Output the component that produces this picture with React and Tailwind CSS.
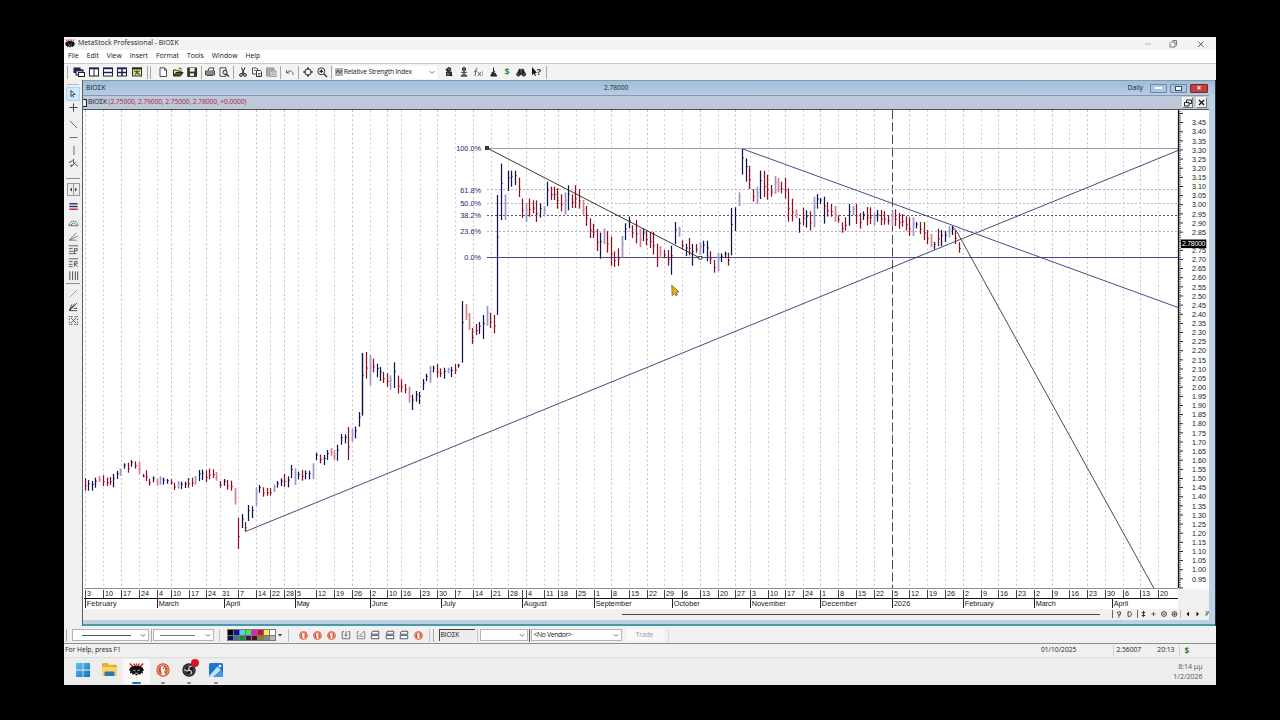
import React from 'react';

/* ---------- price bars: x, high, low, tone (scaled by 3 from a local origin) ---------- */
const SEG_A = '15:234-272r 26:240-272n 37:243-272n 47:233-263n 59:228-246p 70:226-258r 81:233-258r 92:231-255r 100:222-262n 112:213-237n 122:206-228l 133:190-206n 145:188-218r 155:180-200n 166:184-206r 178:185-222p 189:222-232r 199:211-243r 208:236-257r 221:229-247n 231:235-257p 240:229-254l 251:233-254n 262:237-251n 273:238-254r 284:248-270r 294:243-266l 305:245-267n 316:245-264n 326:234-263r 337:233-260r 347:228-254l 358:210-243n 368:209-240n 379:211-246r 389:206-238r 400:208-234r 410:216-242p 421:243-263r 432:237-257n 443:240-269r 454:242-272r 465:264-314p 475:353-447r 487:342-384n 497:366-395r 506:315-363n 517:319-354n 528:262-318l 539:255-278n 550:262-290r 561:264-287r 571:264-287r 582:253-276l 592:243-263n 603:235-258n 613:222-260r 625:229-262n 634:195-234n 645:205-255l 655:215-238n 667:210-242r 677:211-238n 688:212-238n 699:190-238l 710:158-180n 721:164-190r 732:165-195n 742:150-180n 753:144-168p 764:150-180p 773:134-182n 784:102-134n 795:103-130n 805:81-180r 816:87-125l 827:80-115n';
const SEG_B = '57:546-590n 68:370-557n 80:366-446r 90:375-467l 100:386-427r 111:401-442n 121:411-453n 131:426-459r 142:430-470r 152:436-480l 163:397-474n 175:437-490r 185:448-487r 196:462-490r 207:470-518p 217:494-540n 228:483-515n 239:486-522n 249:447-480n 259:431-454n 270:408-459l 280:407-427n 291:402-442r 302:415-441r 313:413-446n 324:413-430l 335:411-441n 346:402-432r 356:402-413n 367:213-398n 378:222-270p 387:249-300p 398:294-342r 409:282-315r 419:276-312n 430:255-327n 441:228-287l 452:248-294r 463:255-310r';
const SEG_C = '143:195-555n 154:101-270n 165:193-270l 175:122-183n 185:122-170n 196:122-165n 207:143-201r 218:206-264r 228:220-276l 239:206-260r 250:211-250r 260:211-276r 272:220-263n 283:228-258l 292:155-228n 304:170-210r 313:170-210r 323:175-236r 335:193-244r 346:187-254l 356:166-241n 367:193-234r 377:166-234r 388:177-236r 399:210-254p 410:228-288r 421:265-324r 431:281-324r 442:297-363r 452:308-386n 462:296-343l 473:303-368r 484:320-407r 494:364-411r 505:355-408r 516:318-382l 527:280-330n 538:260-295n 548:286-324r 560:270-340r 570:296-352p 581:296-333n 590:303-346r 602:306-354r 611:306-374r 622:341-411r 632:348-384p 644:360-384r 655:360-407r 664:347-434n 676:276-342n 687:290-320l 698:331-358r 709:341-378n 718:324-376r 728:342-407n 740:342-368r 750:336-374l 761:332-370n 772:332-394n 782:364-402r';
const SEG_D = '73:390-428r 84:368-424l 95:370-396n 106:365-384n 116:368-407r 125:234-376n 136:232-303n 147:187-228l 158:57-134n 169:85-155n 179:108-177r 190:177-215r 201:170-222l 212:122-207n 223:122-201r 233:134-209r 244:165-200r 255:138-192l 264:144-187p 275:155-190r 286:143-206r 296:175-275r 307:206-274r 318:238-264p 329:264-308n 340:233-286r 350:241-293n 361:244-302r 372:200-292l 382:192-236n 392:204-222n 403:200-281n 413:216-260r 424:222-260r 435:228-275p 446:256-278r 457:277-308r 467:262-302r 478:222-287n 489:228-256l 500:222-282r 511:249-296r 521:244-270n 531:231-286r 541:232-282r 552:250-286l 562:240-275n 573:240-285r 584:243-284r 595:255-284r 606:244-287l 616:238-288r 628:249-296r 638:252-290r 648:259-302r 659:262-318r 669:262-318l 680:276-295n 691:276-312r 702:276-330r 712:300-342r 723:312-352p 734:336-358n 745:296-348r 755:300-348n 767:304-336n 777:288-322l 787:288-315n 797:300-342r 808:337-368r';

const TONES = { n: '#12124e', r: '#8c0f24', l: '#9c98cf', p: '#d9808f' };

function parse(src, ox, oy) {
  return src.split(' ').map((s) => {
    const m = /(\d+):(\d+)-(\d+)(\w)/.exec(s);
    return { x: ox + m[1] / 3, hi: oy + m[2] / 3, lo: oy + m[3] / 3, tone: m[4] };
  });
}
const BARS = [
  ...parse(SEG_A, 80, 400),
  ...parse(SEG_B, 340, 230),
  ...parse(SEG_C, 450, 130),
  ...parse(SEG_D, 690, 130),
];

const WEEKS = [
  [85.5, '3'], [103.5, '10'], [121.5, '17'], [139.5, '24'], [157.5, '4'], [171.5, '10'], [189.5, '17'], [206.5, '24'],
  [220.5, '31'], [238.5, '7'], [256.5, '14'], [270.5, '22'], [284.5, '28'], [295.5, '5', 1], [316.5, '12'], [334.5, '19'],
  [352.5, '26'], [370.5, '2'], [387.5, '10'], [401.5, '16'], [420.5, '23'], [437.5, '30'], [455.5, '7'], [473.5, '14'],
  [491.5, '21'], [508.5, '28'], [526.5, '4'], [544.5, '11'], [558.5, '18'], [576.5, '25'], [594.5, '1'], [611.5, '8'],
  [629.5, '15'], [647.5, '22'], [664.5, '29'], [682.5, '6'], [700.5, '13'], [718.5, '20'], [735.5, '27'], [750.5, '3'],
  [768.5, '10'], [785.5, '17'], [803.5, '24'], [820.5, '1'], [838.5, '8'], [856.5, '15'], [874.5, '22'], [892.5, '5'],
  [909.5, '12'], [927.5, '19'], [945.5, '26'], [963.5, '2'], [981.5, '9'], [998.5, '16'], [1016.5, '23'], [1034.5, '2'],
  [1052.5, '9'], [1069.5, '16'], [1087.5, '23'], [1105.5, '30'], [1123.5, '6'], [1140.5, '13'], [1158.5, '20'],
];
const MONTHS = [
  [85.5, 'February', 30], [157.5, 'March', 20], [224.5, 'April', 14.5], [295.5, 'May', 13], [370.5, 'June', 16], [441.5, 'July', 13],
  [522.5, 'August', 23], [594.5, 'September', 36], [672.5, 'October', 26], [750.5, 'November', 34], [820.5, 'December', 35],
  [892.5, '2026', 16.5], [963.5, 'February', 29], [1034.5, 'March', 20], [1112.5, 'April', 14.5],
];
const PRICES = Array.from({ length: 51 }, (_, i) => 3.45 - i * 0.05).filter((p) => Math.abs(p - 2.8) > 0.01);
const yOf = (p) => 122.6 + (3.45 - p) * 182.5;
const FIBS = [['100.0%', 148.5], ['61.8%', 190], ['50.0%', 203.5], ['38.2%', 215.5], ['23.6%', 231.5], ['0.0%', 257.5]];

function Chart() {
  return (
    <svg className="block h-[499px] w-[1126px] shrink-0" viewBox="83 110 1126 499" fontFamily="'Liberation Sans', Arial, sans-serif">
      <rect x="83" y="110" width="1126" height="499" fill="#fff" />
      <rect x="1178" y="589.5" width="32" height="20" fill="#f0f0f0" />
      {WEEKS.filter((w) => !w[2]).map(([x], i) => (
        <line key={i} x1={x} x2={x} y1="110" y2="588" stroke={i % 5 === 0 || i % 5 === 2 ? '#c2c2c6' : '#d0d0d3'} strokeDasharray="2 2.6" />
      ))}
      <line x1="298.5" x2="298.5" y1="110" y2="588" stroke="#d4d4d7" strokeDasharray="2 2.6" />
      <line x1="892.5" x2="892.5" y1="110" y2="588" stroke="#4a4a4a" strokeDasharray="9 3.5" />

      <line x1="487" x2="1178" y1="148.5" y2="148.5" stroke="#9a9cb8" />
      <line x1="487" x2="1178" y1="189.5" y2="189.5" stroke="#b2b2b8" strokeDasharray="2 2" />
      <line x1="487" x2="1178" y1="203.5" y2="203.5" stroke="#bcbcc2" strokeDasharray="2 2" />
      <line x1="487" x2="1178" y1="215.5" y2="215.5" stroke="#55555c" strokeDasharray="2 2" />
      <line x1="487" x2="1178" y1="231.5" y2="231.5" stroke="#b2b2b8" strokeDasharray="2 2" />
      <line x1="487" x2="1178" y1="257.5" y2="257.5" stroke="#4a4a92" />
      {FIBS.map(([t, y]) => (
        <text key={t} x="481" y={y + 2.7} textAnchor="end" fontSize="7.3" fill="#22226e">{t}</text>
      ))}

      {BARS.map((b, i) => {
        const wide = b.tone === 'l' || b.tone === 'p';
        const x = Math.round(b.x - 0.3) + 0.5;
        const up = b.tone === 'n' || b.tone === 'l';
        const c = b.hi + (b.lo - b.hi) * (up ? 0.35 : 0.6);
        return (
          <g key={i} stroke={TONES[b.tone]}>
            <line x1={x} x2={x} y1={b.hi} y2={b.lo} strokeWidth={wide ? 1.7 : 1.25} />
            <line x1={x} x2={x + 1.4} y1={c} y2={c} strokeWidth="0.8" />
          </g>
        );
      })}
      <line x1="362.5" x2="362.5" y1="353" y2="415" stroke="#12124e" strokeWidth="1.2" />

      <line x1="246" y1="531.3" x2="1178" y2="150.5" stroke="#36366e" strokeWidth="0.9" />
      <line x1="743" y1="149" x2="1178" y2="307.5" stroke="#36367a" strokeWidth="0.9" />
      <line x1="487" y1="148" x2="700" y2="258" stroke="#2c2c2c" strokeWidth="0.95" />
      <line x1="953" y1="227" x2="957" y2="232" stroke="#333" strokeWidth="0.9" />
      <line x1="957" y1="232" x2="1154" y2="588.5" stroke="#333344" strokeWidth="0.9" />
      <rect x="485.5" y="146.500" width="3" height="3" fill="#444" stroke="#111" strokeWidth="0.8" />
      <rect x="698.800" y="256.500" width="3" height="2.600" fill="#fff" stroke="#222" strokeWidth="0.8" />
      <path d="M671.7 285.2 L672.2 295.6 L674.6 293.4 L676.2 296 L677.4 295 L676.4 292.4 L679 291.8 Z" fill="#d8b41c" stroke="#6b5810" strokeWidth="0.7" />

      {/* price axis */}
      <line x1="1178.5" x2="1178.5" y1="110" y2="588" stroke="#111" strokeWidth="1.3" />
      {Array.from({ length: 262 }, (_, i) => {
        const y = 111.65 + i * 1.825;
        const major = i % 5 === 1;
        return y < 588 ? <line key={i} x1="1179" x2={major ? 1183 : 1181} y1={y} y2={y} stroke="#222" strokeWidth={major ? 1 : 0.6} /> : null;
      })}
      {PRICES.map((p) => (
        <text key={p} x="1206" y={yOf(p) + 2.7} textAnchor="end" fontSize="7.2" fill="#161616">{p.toFixed(2)}</text>
      ))}
      <rect x="1181" y="239.500" width="25.300" height="8.600" fill="#000" />
      <text x="1182" y="246.4" fontSize="7" fill="#fff" textLength="23.5">2.78000</text>

      {/* date axis */}
      <line x1="84" x2="1178" y1="588.5" y2="588.5" stroke="#8e8e8e" />
      <line x1="84" x2="1178" y1="598.5" y2="598.5" stroke="#111" strokeWidth="1.1" />
      {WEEKS.map(([x, t]) => (
        <g key={x}>
          {t !== '31' && <line x1={x} x2={x} y1="590" y2="598" stroke="#444" />}
          <text x={x + 1.5} y="596.3" fontSize="7.2" fill="#161616">{t}</text>
        </g>
      ))}
      <line x1="522.5" x2="522.5" y1="590" y2="598" stroke="#444" />
      {MONTHS.map(([x, t, w]) => (
        <g key={x}>
          <line x1={x} x2={x} y1="598" y2="608" stroke="#222" />
          <text x={x + 1.2} y="606.2" fontSize="7.3" fill="#161616" textLength={w}>{t}</text>
        </g>
      ))}
    </svg>
  );
}

/* ---------- icons ---------- */
const K = '#222';
const I = ({ children, className = 'size-3' }) => (
  <svg className={`${className} block shrink-0`} viewBox="0 0 12 12" fill="none" stroke={K} strokeWidth="1">{children}</svg>
);
const icons = {
  cascade: <I><rect x="1" y="2" width="6" height="4.5" fill="#1b2a7c" /><rect x="3" y="4" width="7" height="5" fill="#dde" /><path d="M3 4.5h7" stroke="#142180" strokeWidth="1.6" /><rect x="5.5" y="6.5" width="6" height="4" fill="#fff" /></I>,
  cols: <I><rect x="1.5" y="2" width="9" height="8" fill="#fff" /><path d="M6 2v8" /><path d="M1 2.5h10" stroke="#142160" strokeWidth="1.6" /></I>,
  rows: <I><rect x="1.5" y="2" width="9" height="8" fill="#fff" /><path d="M1 6.5h10M1 2.5h10" stroke="#142160" strokeWidth="1.5" /></I>,
  grid: <I><rect x="1.5" y="2" width="9" height="8" fill="#fff" /><path d="M6 2v8M1 6.5h10M1 2.5h10" stroke="#142160" strokeWidth="1.5" /></I>,
  exp: <I><rect x="1.5" y="2" width="9" height="8" fill="#dfe0a8" stroke="#333" /><path d="M1 2.5h10" strokeWidth="1.8" /><path d="M3 5l3 1 3-1M4 8.5l2-2 3 2.5M6 4v4" stroke="#4b6420" strokeWidth="1.2" /></I>,
  doc: <I><path d="M3 1.8h4.5L9.5 4v6.5H3z" fill="#fff" strokeWidth=".8" /><path d="M7.5 2v2.2h2" strokeWidth=".7" /></I>,
  open: <I><path d="M1.5 9.8V4h3l1 1h3.5v1.5" fill="#efe9a0" /><path d="M1.5 10L4 6.5h7L8.5 10z" fill="#5e5b14" /><path d="M6.5 3c1-1.5 2.5-1 3 .5" /></I>,
  save: <I><rect x="1.8" y="2" width="8.6" height="8.3" fill="#3a3c1a" /><rect x="3.8" y="2" width="4.8" height="3.6" fill="#eee" stroke="none" /><rect x="4" y="7.4" width="4" height="2.6" fill="#eee" stroke="none" /></I>,
  print: <I><path d="M4 5l1-3h5l-1 3" fill="#fff" strokeWidth=".8" /><path d="M1.5 5h9v4h-9z" fill="#ccc" strokeWidth=".8" /><path d="M3 9.5h6M2 7h8" strokeWidth=".8" /></I>,
  preview: <I><path d="M2 1.8h6v8.5H2z" fill="#fff" strokeWidth=".8" /><circle cx="7" cy="6.3" r="2.1" fill="#dfe8ea" /><path d="M8.5 8l2.4 2.6" strokeWidth="1.2" /></I>,
  cut: <I><path d="M4.5 1.5L7 8M8 1.5L5 8" /><circle cx="4" cy="9" r="1.4" /><circle cx="8" cy="9" r="1.4" /></I>,
  copy: <I><path d="M1.5 2h4l1 1v5h-5z" fill="#fff" strokeWidth=".8" /><path d="M5.5 4.5h3.8l1.2 1.2v4.8h-5z" fill="#fff" stroke="#223" strokeWidth=".9" /><path d="M7 7.5h2.5M7 9h2.5M3 4.5h2" strokeWidth=".7" /></I>,
  paste: <I><rect x="1.5" y="2" width="7.5" height="8" fill="#aaa" stroke="#999" /><rect x="5" y="5" width="6" height="5.5" fill="#ddd" stroke="#999" /><path d="M6.5 7h3M6.5 8.7h3" stroke="#888" strokeWidth=".7" /></I>,
  undo: <I><path d="M2.5 4v3h3M2.8 6.8c2-3 6.5-2.5 6.3 2.2" stroke="#555" strokeWidth=".9" /></I>,
  cross: <I><circle cx="6" cy="6" r="3.2" /><path d="M6 1v3M6 8v3M1 6h3M8 6h3" /></I>,
  zoom: <I><circle cx="5.3" cy="5.3" r="3.5" strokeWidth=".9" /><path d="M3.5 5.3h3.6M5.3 3.5v3.6M8 8l3 3" strokeWidth="1.2" /></I>,
  p1: <I><circle cx="6" cy="3.4" r="1.8" fill="#665" /><path d="M3.5 6h5v3.5h-5z" fill="#776" /><path d="M3 3l6 7" strokeWidth="1.4" /></I>,
  p2: <I><circle cx="6" cy="3.2" r="1.7" fill="#777" /><path d="M3 6.4h6M6 5v3M3 10.2c1.2-2.6 4.8-2.6 6 0z" fill="#777" strokeWidth=".8" /></I>,
  fx: <I><path d="M5.5 2C4 2 4 4 3.6 6L3 10M2 5.2h3.4M6 6l3 4M9 6l-3 4" stroke="#555" strokeWidth=".9" /><path d="M10.5 5v5" stroke="#999" strokeWidth=".7" /></I>,
  p3: <I><path d="M6.5 1.5v6M4 10h6M4 7.5L8 5M3.5 9.6L6 7h2l1.5 2.6z" fill="#333" strokeWidth="1" /></I>,
  bino: <I><path d="M2 8.5L4.2 3h1.3L6 8.5zM6.3 8.5L6.8 3h1.4l2.4 5.5z" fill="#222" strokeWidth=".6" /><circle cx="3.4" cy="8.4" r="1.7" fill="#555" /><circle cx="8.8" cy="8.4" r="1.7" fill="#555" /></I>,
};
const Dollar = () => <span className="w-[12px] text-center text-[9px] font-bold leading-3 text-[#3a8a3a]">$</span>;
const Help = () => (
  <span className="flex items-center">
    <svg className="block h-[10px] w-[6px]" viewBox="0 0 6 10"><path d="M1 0v8l1.8-1.6L4 9l1-.5-1.2-2.4H6z" fill="#111" /></svg>
    <b className="text-[9px] leading-3 text-[#222a50]">?</b>
  </span>
);
const Cell = ({ children }) => <div className="flex h-full w-[14.4px] shrink-0 items-center justify-center">{children}</div>;
const Sep = ({ className = '' }) => <div className={`h-[13px] w-px shrink-0 bg-[#a8a8a8] ${className}`} />;
const Chevron = () => <svg className="block h-[5px] w-[6px] shrink-0" viewBox="0 0 6 5"><path d="M.8 1.2L3 3.4 5.2 1.2" fill="none" stroke="#555" strokeWidth=".8" /></svg>;

function TopToolbar() {
  return (
    <div className="flex h-[17px] items-center border-t border-[#c9c9c9] bg-[#f3f3f2]">
      <Sep className="ml-[3px] mr-[4px]" />
      <Cell>{icons.cascade}</Cell><Cell>{icons.cols}</Cell><Cell>{icons.rows}</Cell><Cell>{icons.grid}</Cell><Cell>{icons.exp}</Cell>
      <Sep className="ml-[3px] mr-[2px]" /><Sep className="mr-[5px]" />
      <Cell>{icons.doc}</Cell><Cell>{icons.open}</Cell><Cell>{icons.save}</Cell>
      <Sep className="mx-[1.4px]" />
      <Cell>{icons.print}</Cell><Cell>{icons.preview}</Cell>
      <Sep className="mx-[1.4px]" />
      <Cell>{icons.cut}</Cell><Cell>{icons.copy}</Cell><Cell>{icons.paste}</Cell>
      <Sep className="mx-[1.4px]" />
      <Cell>{icons.undo}</Cell>
      <Sep className="mx-[1.4px]" />
      <Cell>{icons.cross}</Cell><Cell>{icons.zoom}</Cell>
      <Sep className="ml-[1.4px] mr-[2px]" />
      <div className="flex h-[13px] w-[103.5px] items-center bg-white pl-[1px] pr-[2px]">
        <div className="mr-[1px] flex size-[8px] items-center justify-center bg-[#b0b0b0]">
          <svg className="block size-[6px]" viewBox="0 0 6 6"><path d="M0 4l2-3 2 3 2-3" fill="none" stroke="#444" /></svg>
        </div>
        <span className="flex-1 whitespace-nowrap text-[6.8px] leading-[12px] tracking-[-0.22px] text-[#222]">Relative Strength Index</span>
        <Chevron />
      </div>
      <div className="ml-[5px] flex h-full items-center">
        <Cell>{icons.p1}</Cell><Cell>{icons.p2}</Cell><Cell>{icons.fx}</Cell><Cell>{icons.p3}</Cell><Cell><Dollar /></Cell><Cell>{icons.bino}</Cell><Cell><Help /></Cell>
      </div>
      <Sep className="ml-[3px]" />
    </div>
  );
}

function LeftToolbar() {
  const c = 'size-[11px]';
  return (
    <div className="flex w-[18px] shrink-0 flex-col items-center bg-[#f0f0f0] pt-[4px]">
      <div className="mb-[2px] h-px w-[12px] bg-[#b5b5b5]" />
      <div className="flex h-[14px] w-[14px] items-center justify-center border border-[#a9d4f2] bg-[#d2e9f8]">
        <svg className="block h-[8px] w-[6px]" viewBox="0 0 6 8"><path d="M1 .5v6l1.6-1.3L3.6 7.5M1 .5l4 4H2.8" fill="#fff" stroke="#222" strokeWidth=".9" /></svg>
      </div>
      <div className="mt-[1px]"><I className={c}><path d="M6 1.5v9M1.5 6h9" strokeWidth=".9" /></I></div>
      <div className="mt-[6px]"><I className={c}><path d="M2 2l8 8" stroke="#555" strokeWidth=".9" /></I></div>
      <div className="mt-[2px]"><I className={c}><path d="M1.5 6h9" stroke="#555" strokeWidth=".9" /></I></div>
      <div className="mt-[2px]"><I className={c}><path d="M6.5 1v10" stroke="#555" strokeWidth=".9" /></I></div>
      <div className="mt-[2px]"><I className={c}><path d="M1 5l4-2M6 1v5M3 10l6-6M2 8h3M8 7l3 2" stroke="#444" /></I></div>
      <div className="mt-[9px] h-px w-[14px] bg-[#8f8f8f]" />
      <div className="mt-[4px] flex h-[13px] w-[13px] items-center justify-center border border-[#999] bg-[#ececec]">
        <svg className="block h-[11px] w-[11px]" viewBox="0 0 11 11"><path d="M5.5 0v11" stroke="#999" /><path d="M4 3.6L2 5.5l2 1.9zM7 3.6l2 1.9-2 1.9z" fill="#333" /></svg>
      </div>
      <div className="mt-[5px]"><I className={c}><path d="M1.5 3h9M1.5 6h9" stroke="#3a3a78" strokeWidth="1.4" /><path d="M1.5 9h9" stroke="#b8305a" strokeWidth="1.6" /></I></div>
      <div className="mt-[5px]"><I className={c}><path d="M1 9c1-6 9-6 10 0M3.5 9c.5-3 4.5-3 5 0" stroke="#444" strokeDasharray="1.6 .6" strokeWidth=".9" /><path d="M1 9.5h10" strokeWidth=".7" /></I></div>
      <div className="mt-[3px]"><I className={c}><path d="M1.5 10L9 2M1.5 10L10.5 5.5M1.5 10h8" stroke="#555" strokeWidth=".8" /></I></div>
      <div className="mt-[2px]"><I className={c}><path d="M1 2h10M1 5h4M1 8h5M1 10.5h8M7 10.5V5h3v2.5H7" stroke="#444" strokeWidth=".9" /></I></div>
      <div className="mt-[2px]"><I className={c}><path d="M1 2h10M1 5h4M1 8h4M1 10.5h4M7 10.5V5h3v2.5H7l3.5 3" stroke="#444" strokeWidth=".9" /></I></div>
      <div className="mt-[2px]"><I className={c}><path d="M2 1.5v9.5M5 1.5v9.5M8 1.5v9.5M10.5 1.5v9.5" stroke="#333" strokeWidth=".9" /></I></div>
      <div className="mt-[2px] h-px w-[14px] bg-[#8f8f8f]" />
      <div className="mt-[4px]"><I className={c}><path d="M2 10l8-8" stroke="#888" strokeWidth=".8" /></I></div>
      <div className="mt-[2px]"><I className={c}><path d="M1.5 10.5L4 4M1.5 10.5L7 3M1.5 10.5L10 2M2 10.5h8M6 8h4" stroke="#333" strokeWidth=".9" /></I></div>
      <div className="mt-[3px]"><I className={c}><path d="M3 3l6 6M9 3L3 9" stroke="#555" /><path d="M1 1.8h4M7 1.8h4M1 10.2h4M7 10.2h4M1.5 4v1.500M10.500 4v1.500M1.500 7v1.500M10.500 7v1.500" stroke="#444" strokeDasharray="1.5 .8" /></I></div>
    </div>
  );
}

const Duck = ({ className = 'size-[9px]' }) => (
  <svg className={`${className} block shrink-0`} viewBox="0 0 20 20">
    <circle cx="10" cy="10" r="9.5" fill="#d4502c" /><circle cx="10" cy="10" r="7.4" fill="none" stroke="#f8cdb8" strokeWidth="1.1" />
    <path d="M7 5.500c3-2 6.500 0 6 4l-1.500 2 1.500 4.800c-1.500 1-3.500 1-4.500.4L6.800 9z" fill="#fff" /><path d="M11.500 10l5 .6-4.500 1.800z" fill="#f3b61f" /><circle cx="10.800" cy="7.600" r="1" fill="#334" />
  </svg>
);
const Bull = ({ className }) => (
  <svg className={`${className} block shrink-0`} viewBox="0 0 16 14">
    <path d="M1 .5l3 3.500M15 .5l-3 3.500M5 .5l1.500 3M11 .5L9.500 3.500M8 .5v2" stroke="#d01830" strokeWidth="1.500" />
    <path d="M0 8c1-4 4-5 8-5s7 1 8 5l-1.500.5.500 3-2-1-1 2.500-1.500-1.500L8 13.500l-2.500-2L4 13l-1-2.500-2 1 .500-3z" fill="#120c10" />
    <path d="M4.500 7.500l2.500 1M11.500 7.500l-2.500 1M6.500 11h3" stroke="#eee" strokeWidth=".8" />
  </svg>
);

const PALETTE = [
  ['bg-[#000]', 'bg-[#1010b0]', 'bg-[#48d8e8]', 'bg-[#48e848]', 'bg-[#e818d8]', 'bg-[#d01020]', 'bg-[#f0f050]', 'bg-[#fff]'],
  ['bg-[#101060]', 'bg-[#308088]', 'bg-[#208830]', 'bg-[#401060]', 'bg-[#501010]', 'bg-[#888020]', 'bg-[#888]', 'bg-[#b8b8b8]'],
];
const Combo = ({ className, children }) => (
  <div className={`flex h-[12px] shrink-0 items-center border border-[#b4b4b4] bg-white px-[2px] ${className}`}>{children}<Chevron /></div>
);
function BottomToolbar() {
  return (
    <div className="flex h-[17px] items-center border-b border-[#8e8e8e] bg-[#f0f0f0]">
      <Sep className="ml-[2px] mr-[5px]" />
      <Combo className="w-[77px]"><div className="ml-[7px] mr-auto h-px w-[49px] bg-[#555]" /></Combo>
      <Sep className="ml-[2px] mr-[1px]" />
      <Combo className="w-[61px]"><div className="ml-[4px] mr-auto h-px w-[35px] bg-[#777]" /></Combo>
      <Sep className="ml-[5px] mr-[6px] opacity-60" />
      <div className="ml-[1px] flex flex-col gap-px bg-[#777] p-px">
        {PALETTE.map((row, i) => (
          <div key={i} className="flex gap-px">{row.map((c) => <div key={c} className={`h-[4.5px] w-[5px] ${c}`} />)}</div>
        ))}
      </div>
      <svg className="ml-[2px] block h-[3px] w-[4px]" viewBox="0 0 4 3"><path d="M0 0h4L2 2.5z" fill="#333" /></svg>
      <Sep className="ml-[6px] mr-[7px] opacity-70" />
      <Cell><Duck /></Cell><Cell><Duck /></Cell><Cell><Duck /></Cell>
      <Cell><I className="size-[10px]"><path d="M1.5 2v8.5h9V2M1.5 2h2M8.5 2h2M6 1.5v6M4.5 5.5L6 7.5l1.5-2" stroke="#555" /></I></Cell>
      <Cell><I className="size-[10px]"><path d="M1.5 2v8.5h9V2M1.5 2h2M8.5 2h2M3 8l6-6M5 7.5h4" stroke="#777" /></I></Cell>
      {[0, 1, 2].map((i) => <Cell key={i}><I className="size-[10px]"><path d="M3 1.5h7.5v3.5H1.5zM1.5 6.5h9v4h-9z" fill="#fff" stroke="#333a50" /></I></Cell>)}
      <Cell><Duck /></Cell>
      <Sep className="ml-[3px] mr-[3px] opacity-60" /><Sep className="mr-[5px]" />
      <div className="flex h-[12px] w-[36px] items-center border-l border-t border-[#444] bg-[#ececec] pl-px text-[6.8px] leading-none tracking-[-0.15px] text-[#222]">ΒΙΟΣΚ</div>
      <Sep className="ml-[2px] mr-[2px] opacity-60" />
      <Combo className="w-[48px]"><span className="mr-auto" /></Combo>
      <Sep className="ml-[1px] mr-[1px] !bg-[#555]" />
      <Combo className="w-[91px]"><span className="mr-auto whitespace-nowrap text-[6.8px] leading-none tracking-[-0.35px] text-[#222]">&lt;No Vendor&gt;</span></Combo>
      <div className="ml-[4px] flex h-[12px] w-[38px] items-center justify-center bg-[#f8f8f8] text-[6.6px] leading-none text-[#999]">Trade</div>
      <Sep className="ml-[4px] opacity-30" />
    </div>
  );
}

function MdiWindow() {
  return (
    <div className="flex min-w-0 flex-1 flex-col border-l border-[#52606e] bg-[#bcd0e6]">
      <div className="flex h-[15px] items-center border-t border-[#8399ae] bg-gradient-to-b from-[#9fbdd9] to-[#b7cee4] pl-[3px] text-[6.8px] text-[#181c28]">
        <span className="w-[518px]">ΒΙΟΣΚ</span>
        <span className="text-[6.6px]">2.78000</span>
        <span className="ml-auto mr-[7px]">Daily</span>
        <div className="flex h-[9px] w-[17px] items-center justify-center rounded-[1px] border border-[#6a87a6] bg-[#a9c5e2]"><div className="h-[2px] w-[7px] bg-white" /></div>
        <div className="ml-[3px] flex h-[9px] w-[17px] items-center justify-center rounded-[1px] border border-[#6a87a6] bg-[#a9c5e2]"><div className="h-[5px] w-[7px] border border-[#445] bg-white" /></div>
        <div className="ml-[3px] mr-[7px] flex h-[9px] w-[18px] items-center justify-center rounded-[1px] border border-[#7a2530] bg-[#c4403f] text-[8px] font-bold leading-none text-white">×</div>
      </div>
      <div className="flex min-h-0 flex-1 pr-[6px]">
        <div className="flex min-w-0 flex-1 flex-col">
          <div className="flex h-[15px] items-center border-b border-t border-b-[#4c5058] border-t-[#8b97a6] bg-[#bdc9d9] text-[6.8px] text-[#181c28]">
            <div className="h-[8px] w-[4px] border border-l-0 border-[#222] bg-[#e6ecf4]" />
            <span className="ml-[1px] whitespace-nowrap tracking-[-0.13px]">ΒΙΟΣΚ <span className="text-[#b01e48]">(2.75000, 2.79000, 2.75000, 2.78000, +0.0000)</span></span>
            <div className="ml-auto mr-[2px] flex gap-[3px]">
              <div className="flex size-[11px] items-center justify-center border border-b-[#777] border-l-white border-r-[#777] border-t-white bg-[#ececec]">
                <svg className="block size-[8px]" viewBox="0 0 8 8" fill="#eee" stroke="#111" strokeWidth=".9"><path d="M2.5 1h5v3.5h-5z" /><path d="M.5 3.5h4.5V7H.5z" /></svg>
              </div>
              <div className="flex size-[11px] items-center justify-center border border-b-[#777] border-l-white border-r-[#777] border-t-white bg-[#ececec]">
                <svg className="block size-[7px]" viewBox="0 0 7 7" stroke="#111" strokeWidth="1.2"><path d="M1 1l5 5M6 1L1 6" /></svg>
              </div>
            </div>
          </div>
          <Chart />
          <div className="flex h-[11px] items-center bg-[#f0f0f0]">
            <div className="ml-[539px] h-px w-[478px] bg-[#4a4640]" />
            <svg className="ml-auto block h-[11px] w-[100px]" viewBox="1109 609 100 11" fill="none" stroke="#333" strokeWidth=".9">
              <path d="M1112.5 610v8M1137.5 610v8" stroke="#555" />
              <path d="M1117.5 613.5v-1.5h3v2l-2.5 1h2.5M1118 617h1.5M1128 611.8h1.5c2.5 0 2.5 4.6 0 4.6H1128z" />
              <path d="M1143.5 611v6M1141.8 612.5h3.4M1141.8 615.5h3.4" strokeWidth="1.2" />
              <path d="M1151.5 614h4M1153.5 612v4" stroke="#555" />
              <circle cx="1164" cy="614" r="2.4" /><path d="M1162.8 614h2.4" /><circle cx="1174.5" cy="614" r="2.4" /><path d="M1173.2 614h2.6M1174.5 612.8v2.4" />
              <path d="M1180.5 610v8" stroke="#aaa" />
              <path d="M1189 611.5v5l-2.5-2.5zM1196.5 611.5v5l2.5-2.5z" fill="#111" stroke="none" /><path d="M1205.5 612h3.5l-3.5 4M1205.5 614h2.5" stroke="#555" />
            </svg>
          </div>
        </div>
      </div>
      <div className="h-[4px] bg-[#bcd0e6]" />
      <div className="h-[2px] bg-[#4c97a8]" />
    </div>
  );
}

function Taskbar() {
  const mark = <div className="h-[2px] w-[4px] rounded bg-[#8a8a8a]" />;
  return (
    <div className="flex h-[29px] shrink-0 items-center border-b border-t border-b-[#c8c8c8] border-t-[#dcdcdc] bg-[#ededee] pl-[6px]">
      <div className="flex h-[25px] w-[26.5px] flex-col items-center justify-between pb-px pt-[4px]">
        <svg className="block size-[14px]" viewBox="0 0 14 14"><defs><linearGradient id="w" x2="1" y2="1"><stop stopColor="#5cc3ee" /><stop offset="1" stopColor="#1272c0" /></linearGradient></defs><path d="M0 0h6.600v6.600H0zM7.400 0H14v6.600H7.400zM0 7.400h6.600V14H0zM7.400 7.400H14V14H7.400z" fill="url(#w)" /></svg>
      </div>
      <div className="flex h-[25px] w-[26.5px] flex-col items-center justify-between pt-[4px]">
        <svg className="block h-[13px] w-[15px]" viewBox="0 0 15 13"><path d="M0 1.500C0 .7.500 0 1.300 0h4L7 1.700h7c.6 0 1 .5 1 1.100V12c0 .5-.4 1-1 1H1c-.6 0-1-.5-1-1z" fill="#e5b22f" /><path d="M0 4h15v8c0 .6-.4 1-1 1H1c-.6 0-1-.4-1-1z" fill="#f7d560" /><path d="M2.500 13V9.500c0-.5.500-1 1-1h8c.5 0 1 .5 1 1V13z" fill="#2b78b8" /></svg>
      </div>
      <div className="flex h-[25px] w-[26.5px] flex-col items-center justify-between rounded-[3px] bg-[#f9f9f9] pt-[4px]">
        <Bull className="h-[13px] w-[15px]" /><div className="h-[2px] w-[9px] rounded bg-[#1a73b8]" />
      </div>
      <div className="flex h-[25px] w-[26.5px] flex-col items-center justify-between pt-[4px]"><Duck className="size-[14px]" />{mark}</div>
      <div className="relative flex h-[25px] w-[26.5px] flex-col items-center justify-between pt-[4px]">
        <svg className="block size-[14px]" viewBox="0 0 14 14"><circle cx="7" cy="7" r="6.700" fill="#1d1d20" /><circle cx="7" cy="7" r="5" fill="none" stroke="#777" strokeWidth=".7" /><path d="M7 7c-1-3 1-4 2.500-3.500M7 7c3 .5 3 3 1.500 4M7 7c-2 2-4 .5-4.300-1" fill="none" stroke="#ddd" strokeWidth="1.200" /></svg>
        {mark}
        <div className="absolute right-[4px] top-0 size-[8px] rounded-full bg-[#d81820]" />
      </div>
      <div className="flex h-[25px] w-[26.5px] flex-col items-center justify-between pt-[4px]">
        <svg className="block size-[14px]" viewBox="0 0 14 14"><rect width="14" height="14" rx="1.500" fill="#1f74cc" /><path d="M0 13L8.500 3.500 12 7 4.500 14H1.500C.7 14 0 13.500 0 13z" fill="#c4e2f8" /><path d="M4.500 14L12 7l2 2v3.500c0 .8-.6 1.500-1.500 1.500z" fill="#3c9ae6" /><circle cx="11" cy="3" r="1.300" fill="#fff" /></svg>
        {mark}
      </div>
      <div className="ml-auto mr-[13.5px] text-right text-[7px] leading-[9.5px] text-[#555]"><div>8:14 μμ</div><div>1/2/2026</div></div>
    </div>
  );
}

export default function App() {
  return (
    <div className="h-[720px] w-[1280px] overflow-hidden bg-black px-[64px] pt-[37px] font-['Open_Sans','Noto_Sans',sans-serif]">
      <div className="flex h-[648px] w-[1152px] flex-col overflow-hidden bg-[#f0f0f0]">
        <div className="flex h-[13px] shrink-0 items-center bg-[#f3f3f3] pl-[1px] text-[6.9px] text-[#222]">
          <Bull className="h-[9px] w-[10px]" />
          <span className="ml-[3px] whitespace-nowrap">MetaStock Professional - ΒΙΟΣΚ</span>
          <svg className="ml-auto mr-[10px] block h-[10px] w-[64px]" viewBox="0 0 64 10" fill="none" stroke="#555" strokeWidth=".8">
            <path d="M3 5h6" stroke="#aaa" /><path d="M29 3h4v5h-5V3.5M30.500 1.500h4v5" /><path d="M56 2.500l5.500 5.500M61.500 2.500l-5.500 5.500" stroke="#333" />
          </svg>
        </div>
        <div className="flex h-[13px] shrink-0 items-center gap-[8px] bg-white pl-[4px] text-[6.8px] text-[#111]">
          {['File', 'Edit', 'View', 'Insert', 'Format', 'Tools', 'Window', 'Help'].map((m) => <span key={m}>{m}</span>)}
        </div>
        <div className="shrink-0"><TopToolbar /></div>
        <div className="flex h-[546px] shrink-0">
          <LeftToolbar />
          <MdiWindow />
          <div className="w-px shrink-0 bg-[#24303c]" />
        </div>
        <div className="mt-[1px] shrink-0"><BottomToolbar /></div>
        <div className="flex h-[13px] shrink-0 items-center bg-[#f0f0f0] pl-[1px] text-[6.7px] text-[#222]">
          <span>For Help, press F1</span>
          <div className="ml-auto flex h-full items-center">
            <span className="mr-[37px]">01/10/2025</span>
            <div className="flex h-[11px] w-[67px] items-center justify-between border-l border-r border-[#d0d0d0] pl-[2px] pr-[5px]"><span>2.56007</span><span>20:13</span></div>
            <b className="ml-[4px] mr-[27px] text-[8px] text-[#2f7d32]">$</b>
          </div>
        </div>
        <Taskbar />
      </div>
    </div>
  );
}
